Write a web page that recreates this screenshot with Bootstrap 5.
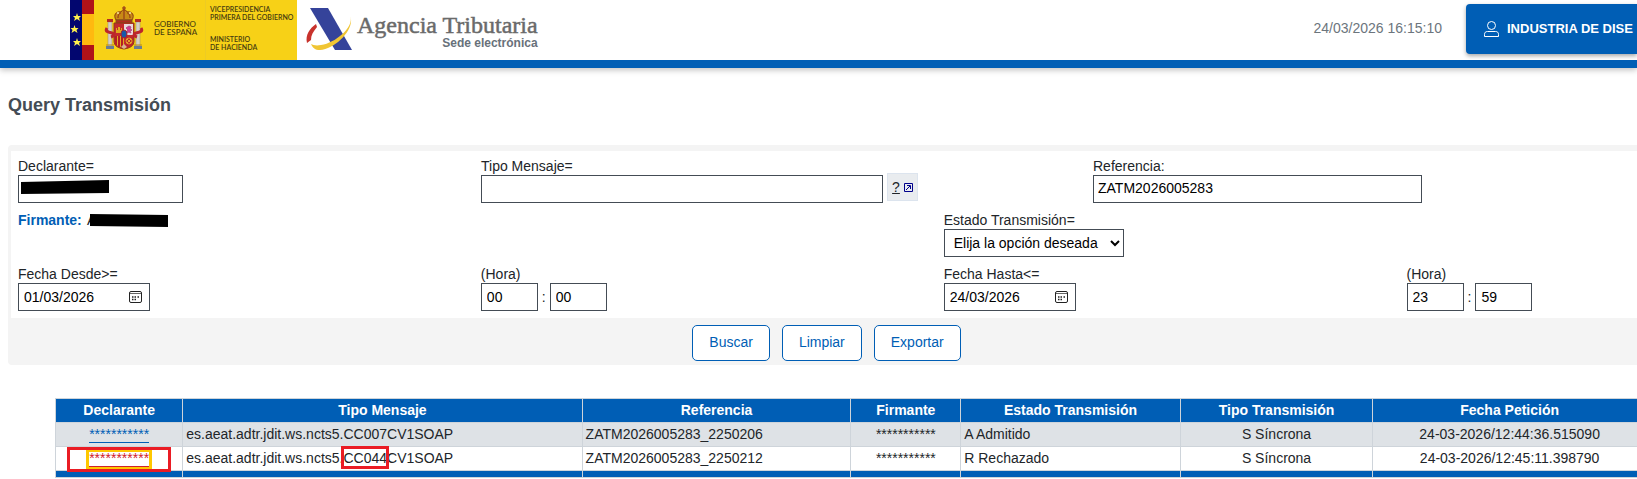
<!DOCTYPE html>
<html lang="es">
<head>
<meta charset="utf-8">
<meta name="viewport" content="width=device-width, initial-scale=1">
<title>Query Transmisión</title>
<link rel="stylesheet" href="https://cdn.jsdelivr.net/npm/bootstrap@5.3.0/dist/css/bootstrap.min.css">
<style>
  :root { --azul: #005eb5; --gris: #f4f4f4; --borde: #444c55; }
  body { font-family: "Liberation Sans", Arial, sans-serif; font-size: 14px; line-height: 18px; color: #212529; overflow-x: hidden; }
  .cabecera { height: 68px; border-bottom: 8px solid var(--azul); box-shadow: 0 2px 6px rgba(0,0,0,.25); padding-left: 70px; }
  .marca { text-align: right; padding-top: 13px; }
  .marca-nombre { font-family: "Liberation Serif", serif; font-size: 24px; line-height: 24px; -webkit-text-stroke: thin; display: block; color: #6a6a6a; }
  .marca-sede { font-size: 12px; line-height: 12px; font-weight: bold; color: #68717a; display: block; }
  .reloj { padding-top: 19px; }
  .usuario { background: var(--azul); color: #fff; font-weight: bold; font-size: 13px; height: 50px; width: 171px; border-radius: 4px 0 0 4px; padding: 0 0 0 17px; box-shadow: 0 2px 4px rgba(0,0,0,.35); }
  .contenido { padding-left: 8px; margin-right: -11px; }
  .titulo { font-size: 18px; line-height: 24px; font-weight: bold; color: #444c55; margin: 25px 0 28px; }
  .panel { background: var(--gris); border-radius: 4px; padding: 6px 0 0 3px; }
  .campos { background: #fff; padding: 6px 10px 7px 7px; display: grid; row-gap: 8px; }
  .fila { display: grid; grid-template-columns: 2fr 2fr 2fr 1fr; }
  .fila-primera { display: grid; grid-template-columns: 463fr 612fr 545fr; }
  .fila label, .fila-primera label { display: block; line-height: 18px; }
  .caja { height: 28px; border: 1px solid var(--borde); background: #fff; color: #000; border-radius: 0; padding: 0 5px; font-size: 14px; display: block; }
  .c-decl { width: 165px; } .c-tipo { width: 402px; padding: 0 4px; } .c-ref { width: 329px; padding: 0 4px 2px; }
  .c-fecha { width: 132px; } .c-hora { width: 57px; }
  select.caja { width: 180px; }
  .ayuda { width: 31px; height: 28px; background: #e9ecef; border: 1px solid #dce4ee; color: #212529; margin-top: -2px; }
  .sobre { position: absolute; }
  .tapa-decl { left: 3px; top: 5px; } .cal { right: 8px; top: 7px; }
  .firmante { font-weight: bold; color: var(--azul); margin-right: 2px; }
  .tapa-firm { margin-left: -7px; position: relative; }
  .acciones { padding: 7px 6px 4px 0; gap: 12px; }
  .accion { border: 1px solid var(--azul); color: var(--azul); background: #fff; border-radius: 5px; font-size: 14px; line-height: 18px; height: 36px; padding: 0 16px 2px; }
  .resultados { margin: 33px 1px 0 47px; width: calc(100% - 48px); table-layout: fixed; border-collapse: collapse; }
  .resultados th, .resultados td { border: 1px solid #ced4da; height: 24px; padding: 0 3px 2px; line-height: 18px; vertical-align: middle; }
  .resultados thead th { background: var(--azul); color: #fff; text-align: center; }
  .resultados .par td { background: #dee2e6; }
  .resultados tfoot td { background: var(--azul); height: 7px; padding: 0; line-height: 0; }
  .resultados a { color: var(--azul); text-decoration: none; border-bottom: 1px solid; display: inline-block; line-height: 16px; }
  .resultados a.foco { color: #d1202b; }
  .col-decl { width: 8%; } .col-tipo { width: 25.1%; } .col-ref { width: 16.9%; } .col-firm { width: 6.9%; } .col-est { width: 13.8%; } .col-trans { width: 12.1%; }
  .marco, .marco-foco { position: absolute; border: 3px solid #ea1c24; pointer-events: none; }
  .marco-foco { border-color: #ffc800; inset: -1px -3px -4px; }
  .marco-fila { inset: -3px -22px -6px; }
  .marco-codigo { inset: -4px -2px -3px; }
</style>
</head>
<body>
<header class="cabecera d-flex align-items-start bg-white">
  <svg class="flex-shrink-0" width="227" height="60" viewBox="0 0 227 60" role="img" aria-label="Gobierno de España">
    <rect width="227" height="60" fill="#f7d117"/>
    <rect width="12" height="60" fill="#02066f"/>
    <rect x="12" width="12" height="60" fill="#b01218"/><rect x="12" y="14" width="12" height="31" fill="#ffb90f"/>
    <g fill="#fff04d">
      <path d="M7 13l1 3h3l-2 2 1 3-3-2-3 2 1-3-2-2h3z"/>
      <path d="M4.500 25l1 3h3l-2 2 1 3-3-2-3 2 1-3-2-2h3z"/><path d="M7 38l1 3h3l-2 2 1 3-3-2-3 2 1-3-2-2h3z"/>
    </g>
    <path d="M135.500 0v60" stroke="#edcb24"/>
    <g stroke-linejoin="round" transform="translate(2 0)">
      <path d="M44 20c-3-5 0-9 5-8 1-3 5-3 6 0 5-1 8 3 5 8z" fill="#c88a16" stroke="#8a3b13"/>
      <path d="M46 18c0-4 2-5 3-5M58 18c0-4-2-5-3-5M52 6v13M50 8h4" fill="none" stroke="#8c2b18"/>
      <circle cx="46" cy="13" r="1" fill="#f8e6a0"/><circle cx="58" cy="13" r="1" fill="#f8e6a0"/>
      <path d="M44 20h16v3H44z" fill="#b22a21" stroke="#84501a"/>
      <path d="M42 23h20v18c0 5-4 7-10 8-6-1-10-3-10-8z" fill="#c32a2c" stroke="#8c3b17"/>
      <path d="M52 24h9v11h-9z" fill="#eadbdc"/>
      <path d="M54 33l2-3-2-2 3-2 2 1-1 2 2 1-2 1 1 2-2-1z" fill="#d33b93" stroke="#b64b83"/>
      <path d="M44 33v-5h1v2h1v-3h2v3h1v-2h1v5z" fill="#e1a91d"/>
      <path d="M43 36h9v12c-5-1-9-3-9-7z" fill="#e1ac20"/><path d="M44 36v9M47 36v11M50 36v12" stroke="#b51e24" stroke-width="2"/>
      <path d="M53 37h8v7l-4 3-4 1z" fill="#bd252a"/><circle cx="57" cy="41" r="3" fill="none" stroke="#e4a529"/><path d="M55 39l4 4m0-4l-4 4" stroke="#e4a529"/>
      <ellipse cx="52" cy="34" rx="3" ry="4" fill="#175aa8" stroke="#a32830"/>
      <path d="M49 47l3-3 3 3-3 2z" fill="#d7b490"/>
      <path d="M36 22h4v24h-4zM64 22h4v24h-4z" fill="#d6cfc4" stroke="#928878" stroke-width=".5"/>
      <path d="M35 19h6v3h-6zM63 19h6v3h-6z" fill="#b42d22"/><path d="M34 46h8v3h-8zM62 46h8v3h-8z" fill="#6a7c94"/><path d="M34 45h8M62 45h8" stroke="#b58a1b"/>
      <path d="M35 28c-2 3 0 4 5 5 3 1 2 3-1 4M69 28c2 3 0 4-5 5-3 1-2 3 1 4" fill="none" stroke="#bd262b" stroke-width="3"/>
    </g>
    <g font-family="Lato, sans-serif" font-size="8" font-weight="500" fill="#463c10">
      <text x="84" y="27">GOBIERNO</text><text x="84" y="35">DE ESPAÑA</text>
    </g>
    <g font-family="Lato, sans-serif" font-size="7" font-weight="600" fill="#463c10">
      <text x="140" y="12">VICEPRESIDENCIA</text><text x="140" y="20">PRIMERA DEL GOBIERNO</text>
      <text x="140" y="42">MINISTERIO</text><text x="140" y="50">DE HACIENDA</text>
    </g>
  </svg>
  <svg class="flex-shrink-0 ms-2" width="48" height="52" viewBox="0 0 48 52" aria-hidden="true">
    <path d="M11 24C5 28 0 35 2 43l4-3c0-5 2-8 6-13z" fill="#c8322c"/>
    <path d="M5 8h18l24 42H30z" fill="#35439a"/>
    <path d="M45 15c5 10-12 27-29 30-5 1-8 0-10-1 2 4 4 6 9 6 16-1 36-22 30-35z" fill="#f0c534"/>
  </svg>
  <div class="marca ms-1"><span class="marca-nombre">Agencia Tributaria</span><span class="marca-sede">Sede electrónica</span></div>
  <span class="reloj ms-auto text-secondary">24/03/2026 16:15:10</span>
  <button type="button" class="usuario btn flex-shrink-0 d-flex align-items-center text-nowrap ms-4 mt-1">
    <svg class="flex-shrink-0 me-2" width="15" height="16" viewBox="0 0 15 16" fill="none" stroke="#fff" aria-hidden="true"><circle cx="7.500" cy="4.500" r="4"/><path d="M.5 15.500v-2c0-2 1-3 3-3h8c2 0 3 1 3 3v2z"/></svg>
    INDUSTRIA DE DISE
  </button>
</header>

<main class="contenido">
  <h1 class="titulo">Query Transmisión</h1>
  <form class="panel">
    <div class="campos">
      <div class="fila-primera">
        <div>
          <label for="decl">Declarante=</label>
          <div class="position-relative"><input id="decl" class="caja c-decl" type="text">
            <svg class="sobre tapa-decl" width="89" height="16" aria-hidden="true"><path d="M0 2L88 0v13L0 14z"/></svg></div>
        </div>
        <div>
          <label for="tipo">Tipo Mensaje=</label>
          <div class="d-flex gap-1"><input id="tipo" class="caja c-tipo" type="text">
            <a href="#" class="ayuda d-flex align-items-center justify-content-center gap-1" aria-label="Ayuda, ventana nueva">?<svg width="9" height="9" viewBox="0 0 9 9" fill="none" stroke="#00008b" aria-hidden="true"><path d="M.5.5h8v8h-8zM2 7l4-4M3 2.500h3.500V6"/></svg></a></div>
        </div>
        <div>
          <label for="ref">Referencia:</label>
          <input id="ref" class="caja c-ref" type="text" value="ZATM2026005283">
        </div>
      </div>
      <div class="fila">
        <div><span class="firmante">Firmante:</span> A<svg class="tapa-firm" width="79" height="14" aria-hidden="true"><path d="M1 0L79 1v12L1 12z"/></svg></div>
        <div></div>
        <div>
          <label for="estado">Estado Transmisión=</label>
          <select id="estado" class="caja"><option>Elija la opción deseada</option></select>
        </div>
      </div>
      <div class="fila">
        <div>
          <label for="desde">Fecha Desde&gt;=</label>
          <div class="position-relative c-fecha"><input id="desde" class="caja c-fecha" type="text" value="01/03/2026">
            <svg class="sobre cal" width="13" height="14" viewBox="0 0 13 14" fill="none" stroke="#222" aria-hidden="true"><rect x=".5" y="1.500" width="12" height="11" rx="1.500"/><path d="M1 3.500h11" stroke="#666"/><path d="M5.500 7h1.500M8.500 7H10M3 7h1.500M3 9.500h1.500M5.500 9.500H7" stroke-width="1.500"/></svg></div>
        </div>
        <div>
          <label for="h1">(Hora)</label>
          <div class="d-flex align-items-center gap-1"><input id="h1" class="caja c-hora" type="text" value="00">:<input class="caja c-hora" type="text" value="00" aria-label="Minutos desde"></div>
        </div>
        <div>
          <label for="hasta">Fecha Hasta&lt;=</label>
          <div class="position-relative c-fecha"><input id="hasta" class="caja c-fecha" type="text" value="24/03/2026">
            <svg class="sobre cal" width="13" height="14" viewBox="0 0 13 14" fill="none" stroke="#222" aria-hidden="true"><rect x=".5" y="1.500" width="12" height="11" rx="1.500"/><path d="M1 3.500h11" stroke="#666"/><path d="M5.500 7h1.500M8.500 7H10M3 7h1.500M3 9.500h1.500M5.500 9.500H7" stroke-width="1.500"/></svg></div>
        </div>
        <div>
          <label for="h2">(Hora)</label>
          <div class="d-flex align-items-center gap-1"><input id="h2" class="caja c-hora" type="text" value="23">:<input class="caja c-hora" type="text" value="59" aria-label="Minutos hasta"></div>
        </div>
      </div>
    </div>
    <div class="acciones d-flex justify-content-center">
      <button type="button" class="accion">Buscar</button>
      <button type="button" class="accion">Limpiar</button>
      <button type="button" class="accion">Exportar</button>
    </div>
  </form>

  <table class="resultados">
    <colgroup><col class="col-decl"><col class="col-tipo"><col class="col-ref"><col class="col-firm"><col class="col-est"><col class="col-trans"><col></colgroup>
    <thead><tr><th>Declarante</th><th>Tipo Mensaje</th><th>Referencia</th><th>Firmante</th><th>Estado Transmisión</th><th>Tipo Transmisión</th><th>Fecha Petición</th></tr></thead>
    <tbody>
      <tr class="par"><td class="text-center"><a href="#">***********</a></td><td>es.aeat.adtr.jdit.ws.ncts5.CC007CV1SOAP</td><td>ZATM2026005283_2250206</td><td class="text-center">***********</td><td>A Admitido</td><td class="text-center">S Síncrona</td><td class="text-center">24-03-2026/12:44:36.515090</td></tr>
      <tr><td class="text-center"><a href="#" class="foco position-relative">***********<span class="marco-foco"></span><span class="marco marco-fila"></span></a></td><td>es.aeat.adtr.jdit.ws.ncts5.<span class="position-relative">CC044<span class="marco marco-codigo"></span></span>CV1SOAP</td><td>ZATM2026005283_2250212</td><td class="text-center">***********</td><td>R Rechazado</td><td class="text-center">S Síncrona</td><td class="text-center">24-03-2026/12:45:11.398790</td></tr>
    </tbody>
    <tfoot><tr><td></td><td></td><td></td><td></td><td></td><td></td><td></td></tr></tfoot>
  </table>
</main>
<script src="https://cdn.jsdelivr.net/npm/bootstrap@5.3.0/dist/js/bootstrap.bundle.min.js"></script>
</body>
</html>
